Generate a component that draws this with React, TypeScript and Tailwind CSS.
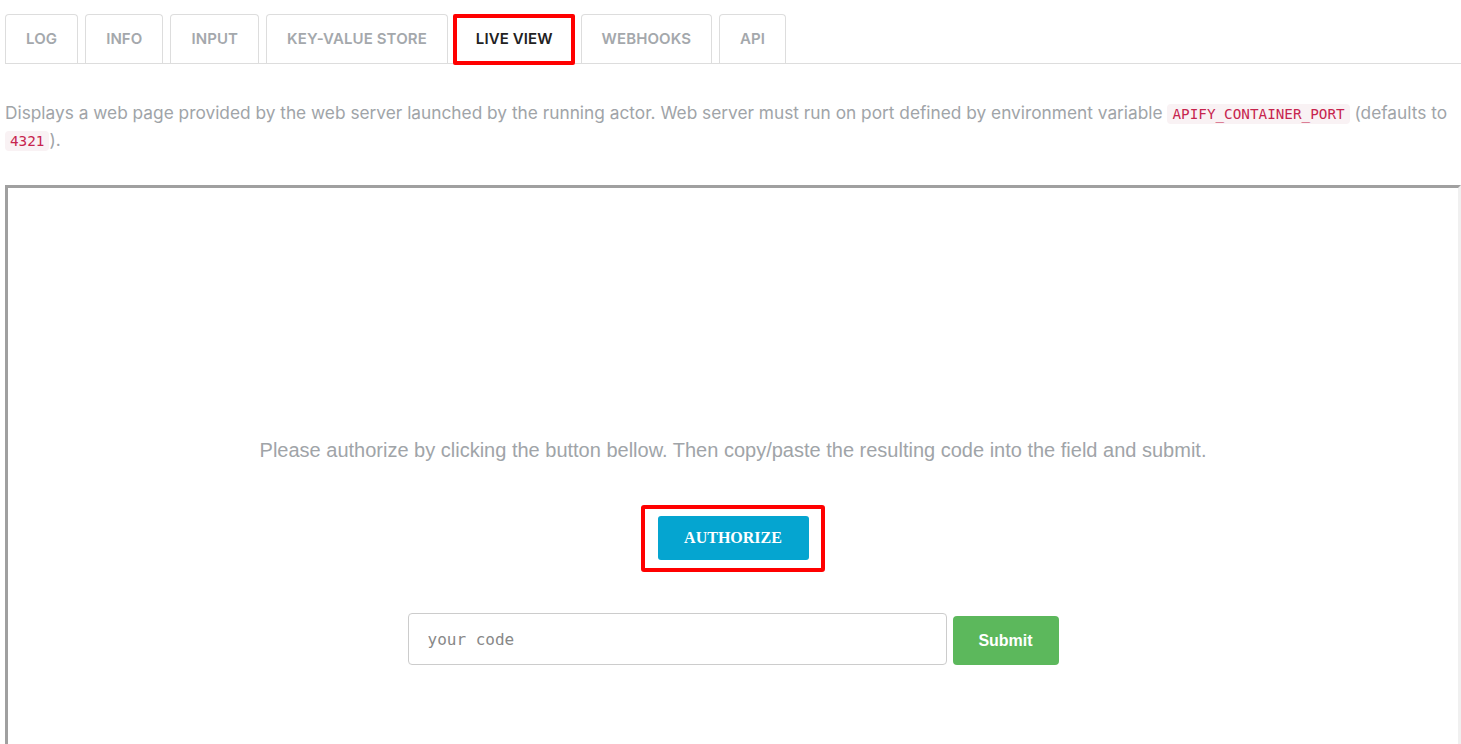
import React from "react";

const tabs = ["LOG", "INFO", "INPUT", "KEY-VALUE STORE", "LIVE VIEW", "WEBHOOKS", "API"];

const Code = ({ children }: { children: React.ReactNode }) => (
  <code className="rounded-[4px] bg-[#f9f2f4] px-[5px] py-[2px] font-['DejaVu_Sans_Mono',monospace] text-[14.3px] leading-none text-[#c7254e]">
    {children}
  </code>
);

export default function App() {
  return (
    <div className="min-h-screen bg-white pl-[5px] font-['Inter',sans-serif]">
      {/* tabs */}
      <div className="flex gap-[7px] border-b border-[#dddddd] pt-[14px]">
        {tabs.map((t) => {
          const active = t === "LIVE VIEW";
          return (
            <div
              key={t}
              className={`relative flex h-[49px] items-center rounded-t-[4px] border border-b-0 px-[20px] text-[15px] font-semibold tracking-[0.1px] ${
                active ? "border-white text-[#222]" : "border-[#dddddd] text-[#a4a8ac]"
              }`}
            >
              {t}
              {active && (
                <div className="pointer-events-none absolute -top-[1px] -left-[3px] -right-[2px] -bottom-[2px] rounded-[2px] border-4 border-[#ff0000]" />
              )}
            </div>
          );
        })}
      </div>

      {/* description */}
      <p className="mt-[35px] pr-[4px] text-[17.3px] leading-[27px] text-[#a0a4a8]">
        Displays a web page provided by the web server launched by the running actor. Web server must run on
        port defined by environment variable <Code>APIFY_CONTAINER_PORT</Code> (defaults to <Code>4321</Code>).
      </p>

      {/* live view frame */}
      <div className="mt-[32px] h-[640px] border-[3px] border-t-[#a0a0a0] border-l-[#a0a0a0] border-r-[#f0f0f0] border-b-[#f0f0f0] bg-white">
        <div className="flex flex-col items-center pt-[251px] font-['Liberation_Sans',Arial,sans-serif]">
          <p className="text-[20px] leading-[23px] text-[#a0a4a8]">
            Please authorize by clicking the button bellow. Then copy/paste the resulting code into the field and
            submit.
          </p>

          <div className="relative mt-[54px]">
            <button className="h-[44px] w-[151px] rounded-[3px] bg-[#05a5d0] font-['Liberation_Serif',serif] text-[16px] font-bold text-white">
              AUTHORIZE
            </button>
            <div className="pointer-events-none absolute -top-[11px] -left-[17px] -right-[16px] -bottom-[12px] rounded-[3px] border-4 border-[#ff0000]" />
          </div>

          <div className="mt-[53px] flex items-end gap-[6px]">
            <input
              placeholder="your code"
              className="h-[52px] w-[539px] rounded-[4px] border border-[#cccccc] px-[19px] font-['DejaVu_Sans_Mono',monospace] text-[16px] text-[#555] placeholder-[#888] outline-none"
            />
            <button className="h-[49px] w-[106px] rounded-[4px] bg-[#5cb85c] text-[16px] font-bold text-white">
              Submit
            </button>
          </div>
        </div>
      </div>
    </div>
  );
}
